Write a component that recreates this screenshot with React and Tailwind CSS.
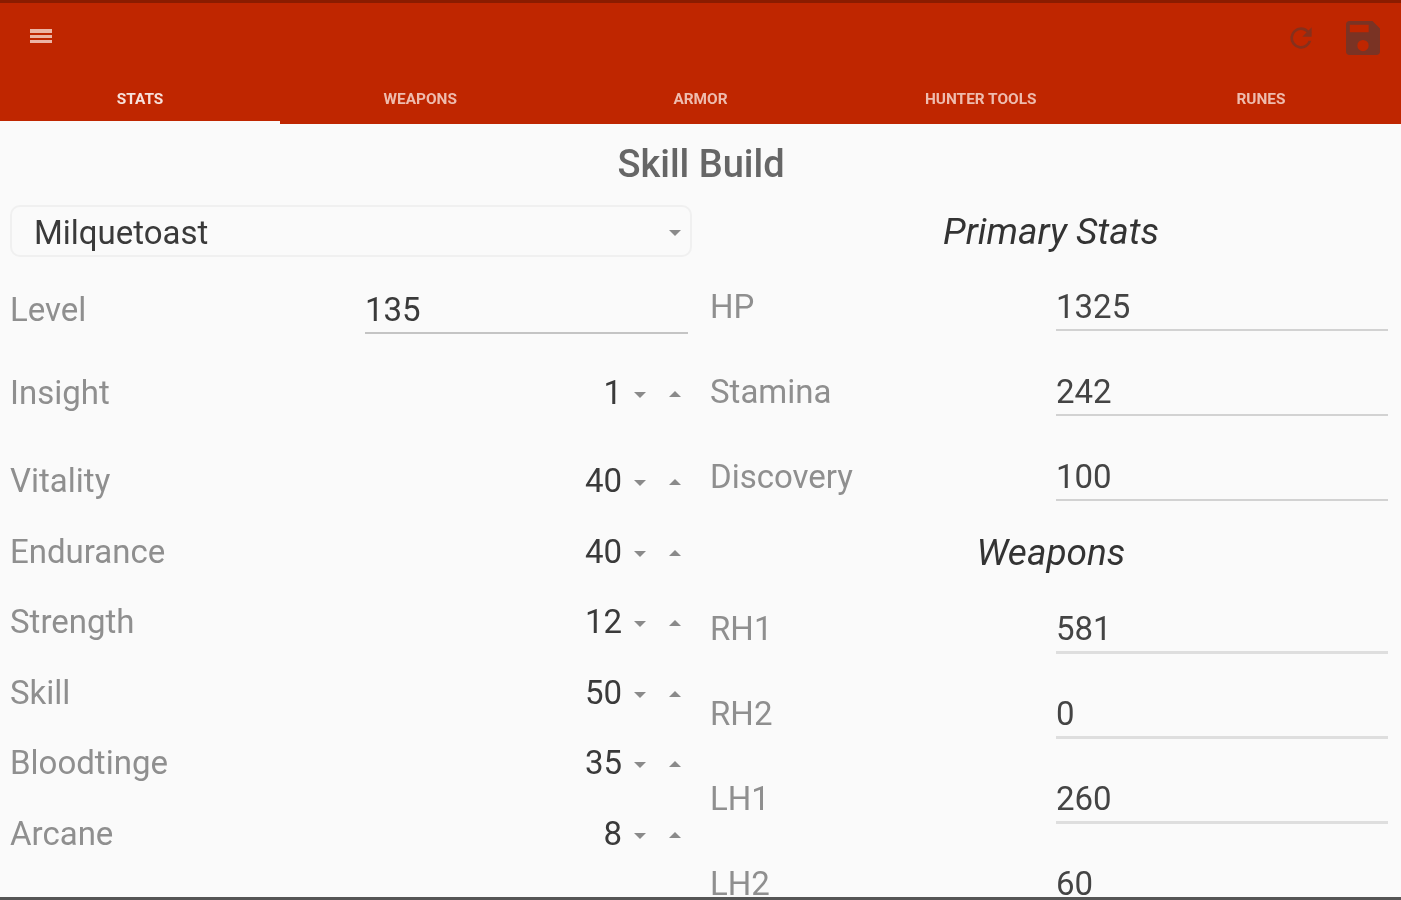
const font = { fontFamily: "Roboto, sans-serif" };

function Down() {
  return (
    <svg width="14" height="8" viewBox="0 0 14 8" className="block">
      <path d="M1 1h12L7 7z" fill="#8a8a8a" />
    </svg>
  );
}
function Up() {
  return (
    <svg width="14" height="8" viewBox="0 0 14 8" className="block">
      <path d="M1 7h12L7 1z" fill="#8a8a8a" />
    </svg>
  );
}

function Stepper({ label, value, h }) {
  return (
    <div className={`flex items-center ${h}`}>
      <span className="text-[33px] text-[#8f8f8f] flex-1">{label}</span>
      <span className="text-[33px] text-[#3a3a3a] -ml-[1px] -translate-x-[1px]">{value}</span>
      <span className="ml-[10px] mt-[4px]"><Down /></span>
      <span className="ml-[21px] mr-[18px] mt-[2px]"><Up /></span>
    </div>
  );
}

function Field({ label, value, tall }) {
  return (
    <div className="flex h-[85px] items-start">
      <span className="pt-[6px] text-[33px] leading-[44px] text-[#8f8f8f] w-[346px] shrink-0">{label}</span>
      <div className={`flex-1 pt-[6px] text-[33px] leading-[44px] text-[#444444] ${tall ? "h-[53px] border-b-[3px] border-[#dedede]" : "h-[52px] border-b-2 border-[#d2d2d2]"}`}>{value}</div>
    </div>
  );
}

const tabs = ["STATS", "WEAPONS", "ARMOR", "HUNTER TOOLS", "RUNES"];

export default function App() {
  return (
    <div style={font} className="h-[900px] w-[1401px] overflow-hidden bg-[#fafafa] flex flex-col border-b-[3px] border-[#555555] blur-[0.6px]">
      <header className="h-[124px] shrink-0 bg-[#bf2600] border-t-[3px] border-[#8a1c00] flex flex-col">
        <div className="h-[70px] flex items-start justify-between">
          <svg width="22" height="17" viewBox="0 0 22 17" className="ml-[30px] mt-[25px]">
            <path d="M0 1h22v4H0zM0 7h22v3H0zM0 12h22v3H0z" fill="#ecb5a5" />
          </svg>
          <div className="flex items-start mr-[21px] mt-[18px]">
            <svg width="32" height="32" viewBox="0 0 24 24" className="mr-[29px] mt-[1px]">
              <path fill="#86301c" d="M17.65 6.35A7.96 7.96 0 0 0 12 4a8 8 0 1 0 7.73 10h-2.08A6 6 0 1 1 12 6c1.66 0 3.14.69 4.22 1.78L13 11h7V4z" />
            </svg>
            <svg width="34" height="34" viewBox="3 3 18 18">
              <path fill="#7a3324" d="M17 3H5a2 2 0 0 0-2 2v14a2 2 0 0 0 2 2h14a2 2 0 0 0 2-2V7zm-5 16a3 3 0 1 1 0-6 3 3 0 0 1 0 6zm3-10H5V5h10z" />
            </svg>
          </div>
        </div>
        <nav className="flex-1 grid grid-cols-5">
          {tabs.map((t, i) => (
            <div key={t} className={`flex items-start justify-center pt-[16px] text-[15.4px] leading-[20px] font-bold ${i === 0 ? "text-[#f7e2dc] border-b-[3px] border-[#fafafa]" : "text-[#eebcae]"}`}>
              {t}
            </div>
          ))}
        </nav>
      </header>

      <h1 className="h-[80px] shrink-0 flex items-center justify-center text-[38px] font-medium text-[#666666] pl-[1px]">Skill Build</h1>

      <main className="flex flex-1 min-h-0">
        <section className="w-[700px] shrink-0 pl-[10px]">
          <div className="h-[52px] mt-[1px] w-[682px] rounded-[10px] border-2 border-[#f0f0f0] flex items-center justify-between pl-[22px] pr-[8px] pt-[4px] text-[33px] text-[#3a3a3a]">
            Milquetoast
            <Down />
          </div>
          <div className="flex items-start h-[83px] pt-[31px] -mb-[8px]">
            <span className="text-[33px] leading-[44px] text-[#8f8f8f] w-[355px] shrink-0">Level</span>
            <div className="w-[323px] h-[46px] border-b-2 border-[#c4c4c4] text-[33px] leading-[44px] text-[#3a3a3a]">135</div>
          </div>
          <Stepper label="Insight" value="1" h="h-[88px] mt-[17px]" />
          <Stepper label="Vitality" value="40" h="h-[88px]" />
          <Stepper label="Endurance" value="40" h="h-[70px] -mt-[8px]" />
          <Stepper label="Strength" value="12" h="h-[70px]" />
          <Stepper label="Skill" value="50" h="h-[71px]" />
          <Stepper label="Bloodtinge" value="35" h="h-[70px]" />
          <Stepper label="Arcane" value="8" h="h-[71px]" />
        </section>

        <section className="flex-1 pl-[10px] pr-[13px]">
          <div className="h-[56px] flex items-center justify-center pl-[4px] text-[37px] italic text-[#333333]">Primary Stats</div>
          <div className="pt-[19px]">
            <Field label="HP" value="1325" />
            <Field label="Stamina" value="242" />
            <Field label="Discovery" value="100" />
          </div>
          <div className="h-[66px] -mt-[14px] flex items-center justify-center pl-[4px] text-[37px] italic text-[#333333]">Weapons</div>
          <div className="pt-[15px]">
            <Field label="RH1" value="581" tall />
            <Field label="RH2" value="0" tall />
            <Field label="LH1" value="260" tall />
            <Field label="LH2" value="60" tall />
          </div>
        </section>
      </main>
    </div>
  );
}
